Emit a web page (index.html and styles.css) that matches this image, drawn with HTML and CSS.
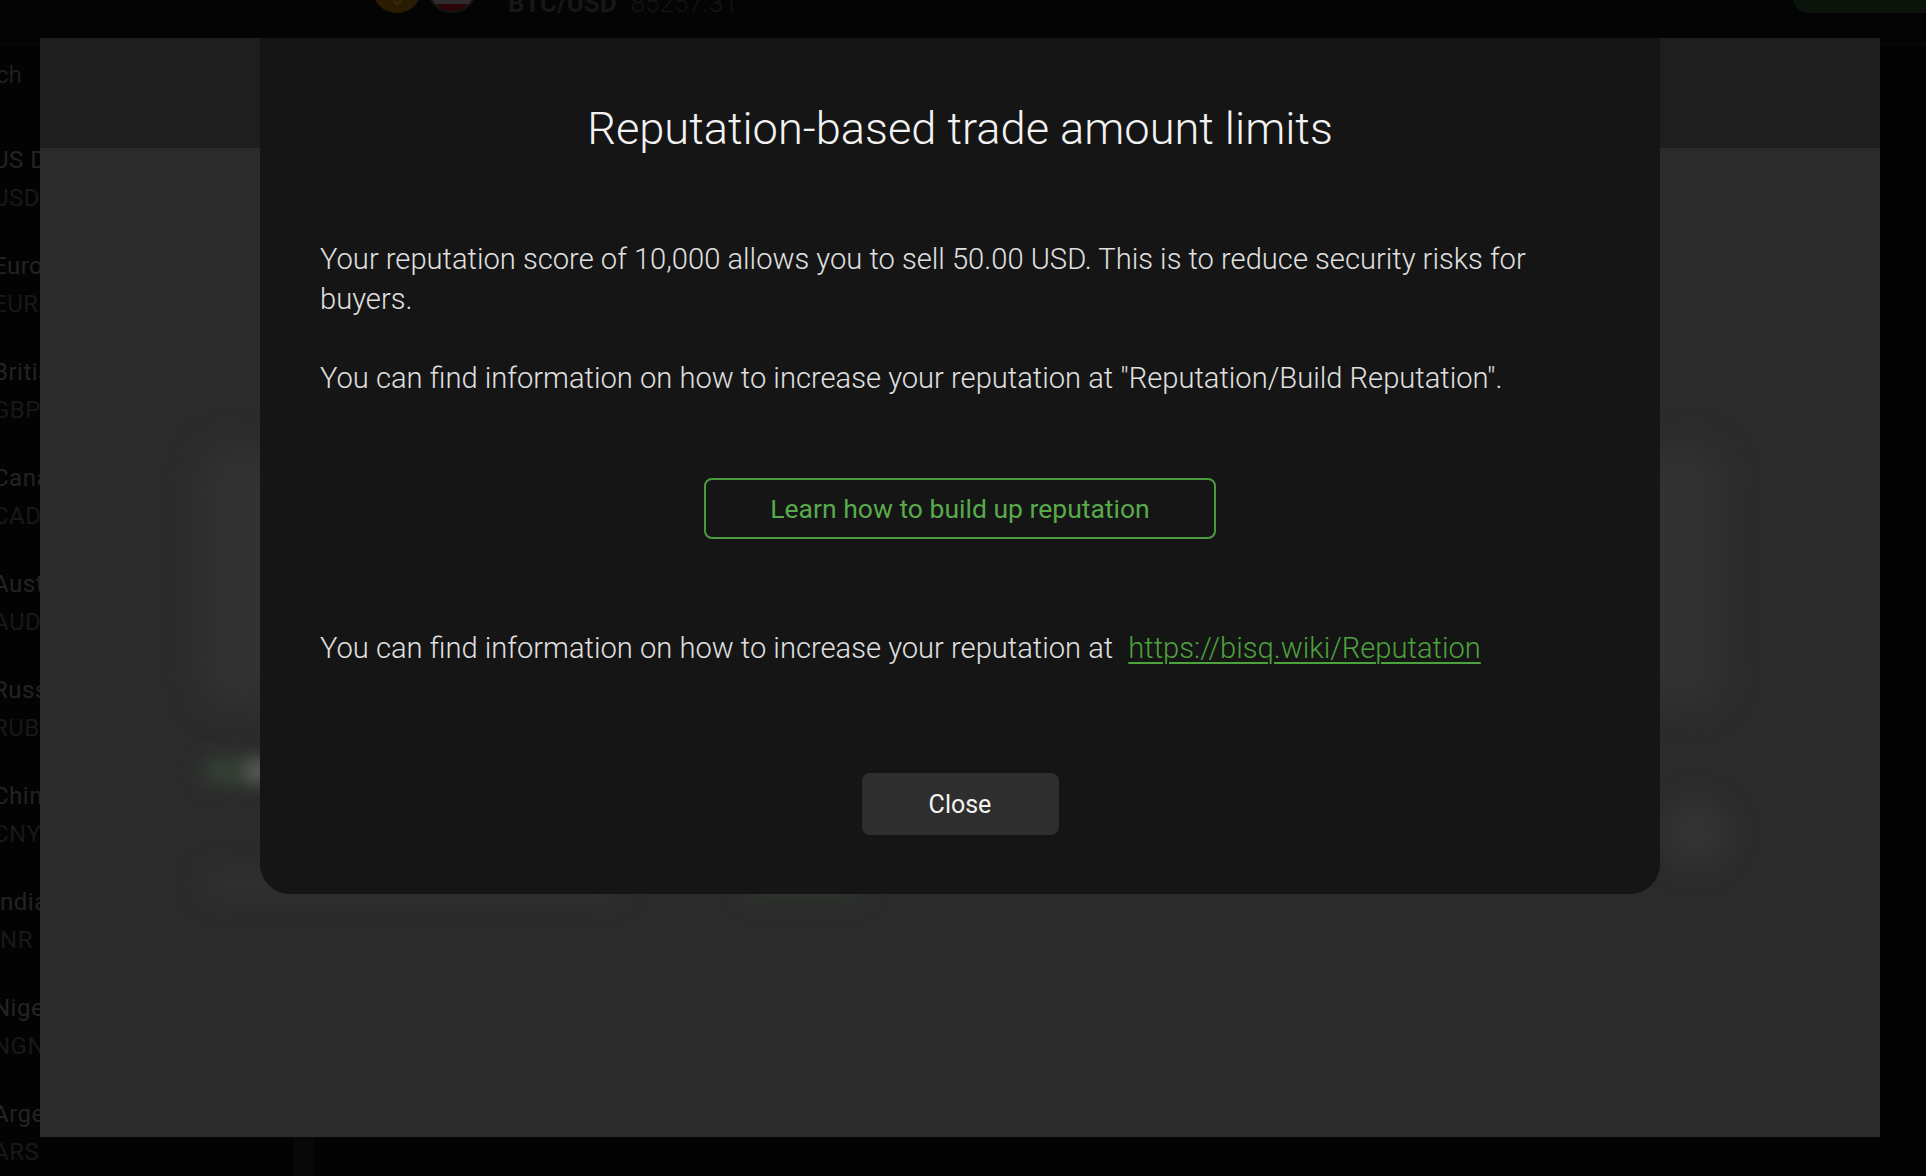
FILE: index.html
```html
<!DOCTYPE html>
<html lang="en">
<head>
<meta charset="utf-8">
<title>Reputation-based trade amount limits</title>
<link rel="stylesheet" href="styles.css">
</head>
<body>
<header class="topbar">
  <div class="topbar-inner">
    <div class="coin coin-btc"><span class="btc-mark">₿</span></div>
    <div class="coin coin-usd"></div>
    <div class="pair"><span class="pair-name">BTC/USD</span><span class="pair-price">85257.31</span></div>
    <div class="top-action"></div>
  </div>
</header>
<div class="main">
  <aside class="sidebar">
    <div class="search">Search</div>
    <ul class="market-list">
      <li class="market"><span class="m-name">US Dollar</span><span class="m-code">USD</span></li>
      <li class="market"><span class="m-name">Euro</span><span class="m-code">EUR</span></li>
      <li class="market"><span class="m-name">British Pound</span><span class="m-code">GBP</span></li>
      <li class="market"><span class="m-name">Canadian Dollar</span><span class="m-code">CAD</span></li>
      <li class="market"><span class="m-name">Australian Dollar</span><span class="m-code">AUD</span></li>
      <li class="market"><span class="m-name">Russian Ruble</span><span class="m-code">RUB</span></li>
      <li class="market"><span class="m-name">Chinese Yuan</span><span class="m-code">CNY</span></li>
      <li class="market"><span class="m-name">Indian Rupee</span><span class="m-code">INR</span></li>
      <li class="market"><span class="m-name">Nigerian Naira</span><span class="m-code">NGN</span></li>
      <li class="market"><span class="m-name">Argentine Peso</span><span class="m-code">ARS</span></li>
    </ul>
  </aside>
  <div class="divider-col"></div>
  <section class="content"></section>
</div>

<div class="dim">
  <div class="dim-top"></div>
  <div class="dim-body">
    <div class="ghost-card"></div>
    <div class="ghost-row">
      <div class="ghost-pill"></div>
      <div class="ghost-dot"></div>
    </div>
    <div class="ghost-row2">
      <div class="ghost-line"></div>
      <div class="ghost-green"></div>
      <div class="ghost-avatar"></div>
    </div>
  </div>

  <div class="modal">
    <h1 class="modal-title">Reputation-based trade amount limits</h1>
    <p class="modal-text">Your reputation score of 10,000 allows you to sell 50.00 USD. This is to reduce security risks for buyers.</p>
    <p class="modal-text gap-small">You can find information on how to increase your reputation at "Reputation/Build Reputation".</p>
    <div class="btn-row btn-row-learn">
      <button class="btn-outline">Learn how to build up reputation</button>
    </div>
    <p class="modal-text link-line">You can find information on how to increase your reputation at <a class="wiki-link" href="#">https://bisq.wiki/Reputation</a></p>
    <div class="btn-row btn-row-close">
      <button class="btn-close">Close</button>
    </div>
  </div>
</div>
</body>
</html>
```

FILE: styles.css
```css
* { box-sizing: border-box; }

html, body {
  margin: 0;
  padding: 0;
}

body {
  width: 1926px;
  height: 1176px;
  overflow: hidden;
  background: #040404;
  font-family: Roboto, "Noto Sans", "Liberation Sans", sans-serif;
  position: relative;
  display: flex;
  flex-direction: column;
}

/* ---------- top bar (behind dim) ---------- */
.topbar {
  height: 45px;
  border-bottom: 1px solid #0b0b0b;
  overflow: hidden;
  flex: none;
}

.topbar-inner {
  margin-top: -37px;
  height: 50px;
  display: flex;
  align-items: flex-start;
  padding-left: 372px;
}

.coin {
  width: 50px;
  height: 50px;
  border-radius: 50%;
  flex: none;
}

.coin-btc {
  background: #2a1b03;
  display: flex;
  align-items: flex-end;
  justify-content: center;
  color: #3a2a10;
  font-size: 18px;
  line-height: 20px;
  overflow: hidden;
}

.btc-mark { margin-bottom: 6px; }

.coin-usd {
  margin-left: 5px;
  background: linear-gradient(to bottom, #2c2c2c 0 84%, #2a0407 84%);
  border: 2px solid #151515;
}

.pair {
  margin-top: 25px;
  margin-left: 31px;
  display: flex;
  gap: 14px;
  line-height: 30px;
}

.pair-name {
  font-size: 26px;
  font-weight: 700;
  color: #171717;
}

.pair-price {
  font-size: 26px;
  font-weight: 300;
  color: #141414;
}

.top-action {
  margin-left: auto;
  margin-right: -40px;
  width: 173px;
  height: 50px;
  border-radius: 15px;
  background: #0b140b;
}

/* ---------- main layout (behind dim) ---------- */
.main {
  flex: 1;
  display: flex;
  min-height: 0;
}

.sidebar {
  width: 293px;
  flex: none;
  overflow: hidden;
  background: #030303;
}

.search {
  height: 81px;
  line-height: 60px;
  font-size: 24px;
  color: #1e1e1e;
  margin-left: -52px;
}

.market-list {
  list-style: none;
  margin: 0;
  padding: 0;
}

.market {
  height: 106px;
  padding: 15px 0;
  display: flex;
  flex-direction: column;
  margin-left: -7px;
}

.m-name {
  line-height: 38px;
  font-size: 24px;
  color: #232323;
  letter-spacing: 0.5px;
  white-space: nowrap;
}

.m-code {
  line-height: 38px;
  font-size: 24px;
  color: #181818;
  letter-spacing: 0.5px;
}

.divider-col {
  width: 21px;
  flex: none;
  background: #080808;
}

.content {
  flex: 1;
  background: #030303;
}

/* ---------- dim overlay ---------- */
.dim {
  position: absolute;
  left: 40px;
  top: 38px;
  width: 1840px;
  height: 1099px;
  background: #2b2b2b;
  overflow: hidden;
}

.dim-top {
  height: 110px;
  background: #1e1e1e;
}

.dim-body {
  padding-left: 163px;
}

.ghost-card {
  margin-top: 300px;
  width: 1517px;
  height: 258px;
  border-radius: 24px;
  background: #323232;
  filter: blur(16px);
}

.ghost-row {
  margin-top: 52px;
  display: flex;
  align-items: center;
  gap: 0;
}

.ghost-pill {
  width: 60px;
  height: 26px;
  border-radius: 13px;
  background: #364236;
  filter: blur(10px);
}

.ghost-dot {
  width: 26px;
  height: 26px;
  margin-left: -18px;
  border-radius: 50%;
  background: #5a5c5a;
  filter: blur(8px);
}

.ghost-row2 {
  margin-top: 88px;
  display: flex;
  align-items: center;
}

.ghost-line {
  width: 420px;
  height: 24px;
  border-radius: 12px;
  background: #313131;
  filter: blur(12px);
}

.ghost-green {
  margin-left: 120px;
  width: 120px;
  height: 24px;
  border-radius: 12px;
  background: #2f3a2e;
  filter: blur(12px);
}

.ghost-avatar {
  margin-left: auto;
  margin-right: 150px;
  margin-top: -100px;
  width: 70px;
  height: 70px;
  border-radius: 50%;
  background: #333;
  filter: blur(12px);
}

/* ---------- modal ---------- */
.modal {
  position: absolute;
  left: 220px;
  top: 0;
  width: 1400px;
  padding: 65px 60px 59px;
  background: #151515;
  border-radius: 0 0 30px 30px;
}

.modal-title {
  margin: 0;
  font-size: 45.2px;
  line-height: 52px;
  font-weight: 300;
  color: #f2f2f2;
  text-align: center;
}

.modal-text {
  margin: 84px 0 0;
  font-size: 29.15px;
  line-height: 40px;
  font-weight: 300;
  color: #e0e0e0;
}

.modal-text.gap-small {
  margin-top: 39px;
}

.btn-row {
  display: flex;
  justify-content: center;
}

.btn-row-learn {
  margin-top: 80px;
}

.btn-outline {
  width: 512px;
  height: 61px;
  border: 2px solid #4b9a3d;
  border-radius: 8px;
  background: transparent;
  color: #58ab4a;
  font-family: inherit;
  font-size: 26.5px;
  font-weight: 400;
  padding: 0;
}

.link-line {
  margin-top: 89px;
}

.wiki-link {
  margin-left: 8px;
  color: #4ca23c;
  text-decoration: underline;
  text-underline-offset: 4px;
  text-decoration-thickness: 2px;
}

.btn-row-close {
  margin-top: 105px;
}

.btn-close {
  width: 197px;
  height: 62px;
  border: none;
  border-radius: 8px;
  background: #2e2e2e;
  color: #f2f2f2;
  font-family: inherit;
  font-size: 25px;
  font-weight: 400;
  padding: 0;
}
```
